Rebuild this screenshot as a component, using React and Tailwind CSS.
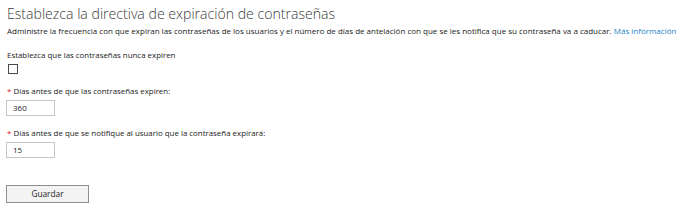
export default function App() {
  const font = { fontFamily: '"Open Sans", "Noto Sans", sans-serif' };
  return (
    <div className="w-[700px] h-[221px] bg-white text-[#222222] pl-[7px] pt-[4px]" style={font}>
      <h1 className="text-[14.1px] font-light leading-[20px] text-[#3a3a3a] whitespace-nowrap">
        Establezca la directiva de expiración de contraseñas
      </h1>
      <p className="text-[8px] leading-[12px] mt-[1px] whitespace-nowrap">
        Administre la frecuencia con que expiran las contraseñas de los usuarios y el número de días de antelación con que se les notifica que su contraseña va a caducar.{' '}
        <a className="text-[#1a7fc8]">Más información</a>
      </p>
      <div className="text-[7.9px] leading-[12px] mt-[12px]">Establezca que las contraseñas nunca expiren</div>
      <div className="mt-[3px] ml-[1px] w-[10px] h-[10px] border border-[#4a4a4a] bg-white" />
      <div className="text-[7.9px] leading-[12px] mt-[11px]">
        <span className="text-[#e81123]">*</span> Días antes de que las contraseñas expiren:
      </div>
      <div className="mt-[3px] -ml-[1px] w-[49px] h-[16px] border border-[#c6c6c6] text-[8px] leading-[14px] pl-[6px]">360</div>
      <div className="text-[7.9px] leading-[12px] mt-[11px]">
        <span className="text-[#e81123]">*</span> Días antes de que se notifique al usuario que la contraseña expirará:
      </div>
      <div className="mt-[3px] -ml-[1px] w-[49px] h-[16px] border border-[#c6c6c6] text-[8px] leading-[14px] pl-[6px]">15</div>
      <div className="mt-[27px] -ml-[1px] w-[83px] h-[18px] border border-[#8e8e8e] bg-[#f4f4f4] text-[8.3px] leading-[16px] text-center">Guardar</div>
    </div>
  );
}
